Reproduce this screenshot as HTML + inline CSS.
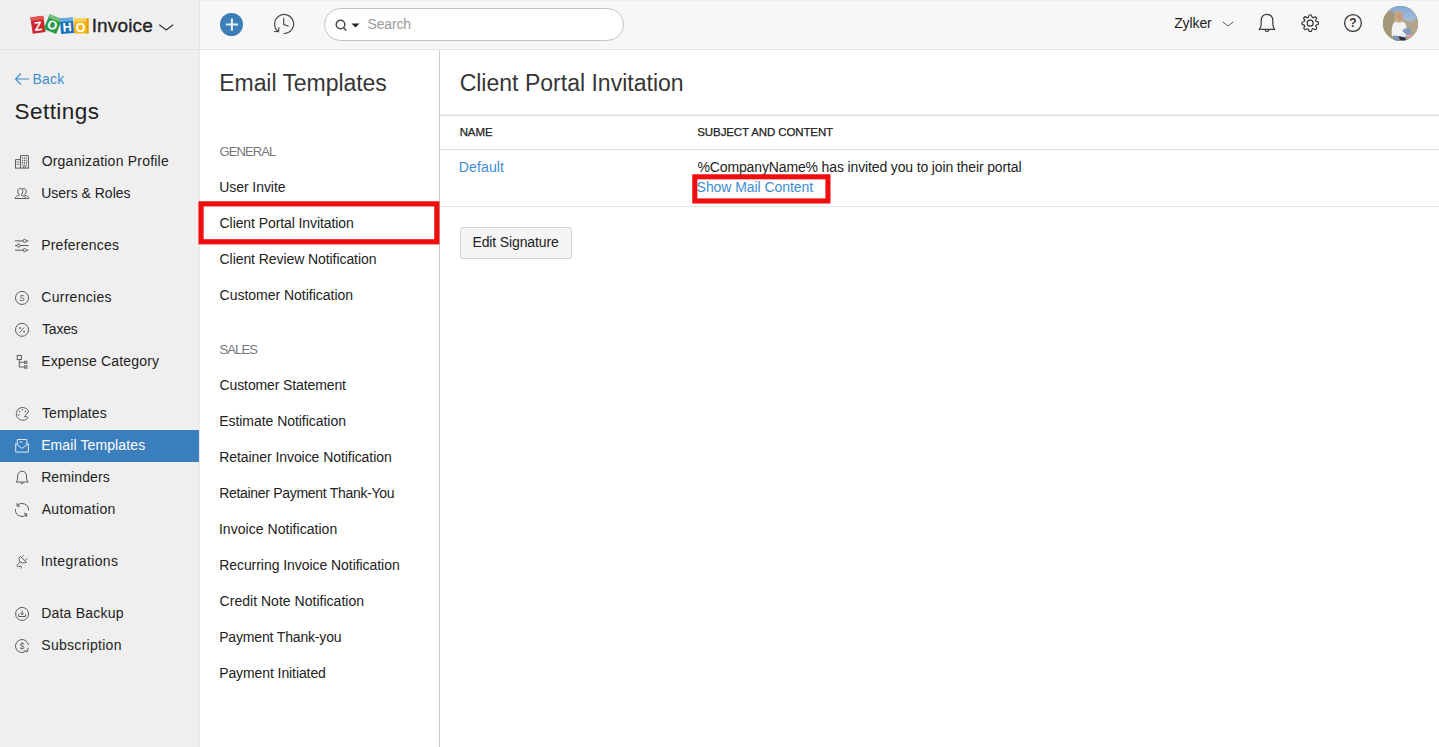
<!DOCTYPE html>
<html><head><meta charset="utf-8">
<style>
*{box-sizing:border-box;margin:0;padding:0}
html,body{width:1439px;height:747px;overflow:hidden;background:#fff}
body{font-family:"Liberation Sans",sans-serif;color:#222;font-size:14px;position:relative}
.abs{position:absolute}
#left{left:0;top:0;width:199px;height:747px;background:#efefef}
#topbar{left:199px;top:0;width:1240px;height:50px;background:#f7f7f7;border-bottom:1px solid #e4e4e4;border-left:1px solid #e6e6e6}
#lefttop{left:0;top:0;width:199px;height:50px;border-bottom:1px solid #e2e2e2}
.t{position:absolute;white-space:nowrap;line-height:1}
.nav{position:absolute;white-space:nowrap;font-size:14px;color:#222;line-height:1}
.mid{position:absolute;white-space:nowrap;font-size:14px;color:#222;line-height:1}
.ico{position:absolute;left:14px;width:16px;height:16px}
.ico svg{width:16px;height:16px;display:block;fill:none;stroke:#5c5c5c;stroke-width:1;overflow:visible}
</style></head><body>
<div id="left" class="abs"></div>
<div id="lefttop" class="abs"></div>
<div id="topbar" class="abs"></div>
<div class="abs" style="left:439px;top:50px;width:1px;height:697px;background:#cbcbcb"></div>
<div class="abs" style="left:199px;top:50px;width:1px;height:697px;background:#e8e8e8"></div>

<div class="abs" style="left:200px;top:0;width:1239px;height:1px;background:#eeeeee"></div>
<!-- logo -->
<div id="logo" class="abs" style="left:28px;top:10px;width:64px;height:28px">
<svg width="64" height="28" viewBox="0 0 64 28">
<g font-family="Liberation Sans, sans-serif" font-weight="bold" font-size="12.5" fill="#fff" text-anchor="middle">
<g transform="rotate(-8 10 15)"><rect x="3.5" y="6.500" width="13" height="16.500" fill="#cf2630"/><rect x="3.5" y="6.500" width="13" height="3.500" fill="#e4564f"/><text x="10" y="20.500">Z</text></g>
<g transform="rotate(22 24.500 14.500)"><rect x="18" y="6" width="13.500" height="16" fill="#2a9a47"/><rect x="18" y="6" width="13.500" height="3.500" fill="#74c17e"/><text x="24.700" y="19.300">O</text></g>
<g transform="rotate(-5 39 16)"><rect x="32.500" y="8" width="13" height="15.500" fill="#1b72b8"/><rect x="32.500" y="8" width="13" height="3.500" fill="#6aade0"/><text x="39" y="21.500">H</text></g>
<g><rect x="46" y="8.500" width="14.500" height="15" fill="#f7b81d"/><rect x="46" y="8.500" width="14.500" height="3" fill="#fbd35a"/><rect x="58.500" y="8.500" width="2" height="15" fill="#e39a12"/><text x="52.500" y="21.700">O</text></g>
</g></svg></div>
<div class="t" style="left:91.700px;top:15.500px;font-size:19px;color:#222;-webkit-text-stroke:0.35px #262626;color:#262626;letter-spacing:0.150px">Invoice</div>
<svg class="abs" style="left:158px;top:21.500px" width="16" height="10" viewBox="0 0 16 10"><path d="M1.3 2.700 L8.200 8 L15.100 2.700" fill="none" stroke="#333" stroke-width="1.2"/></svg>

<!-- topbar items -->
<div class="abs" style="left:220px;top:13px;width:23.200px;height:23.200px;border-radius:50%;background:#3b7eb8"></div>
<svg class="abs" style="left:220px;top:13px" width="23" height="23" viewBox="0 0 23 23"><path d="M11.900 5.500V17.700M5.800 11.600H18" stroke="#e6eff7" stroke-width="2" fill="none"/></svg>
<svg class="abs" style="left:272px;top:12px" width="24" height="24" viewBox="0 0 24 24" fill="none" stroke="#4a4a4a" stroke-width="1.2"><path d="M6.500 19.700A9.500 9.500 0 1 1 11.500 21.500"/><path d="M11.700 5.700V12.500L16.700 14.200"/><path d="M7 15.300L6.500 19.700L2 19.500"/></svg>
<div class="abs" style="left:324px;top:8px;width:300px;height:33px;border:1px solid #c3c3c3;border-radius:17px;background:#fff"></div>
<svg class="abs" style="left:333.700px;top:17.600px" width="14" height="14" viewBox="0 0 14 14" fill="none" stroke="#444" stroke-width="1.4"><circle cx="6.5" cy="6.5" r="4.3"/><path d="M9.6 9.8L12.3 12.6"/></svg>
<svg class="abs" style="left:350.500px;top:22.600px" width="9" height="5" viewBox="0 0 9 5"><path d="M0.5 0.5H8.5L4.5 4.5Z" fill="#222"/></svg>
<div class="t" style="left:367.44px;top:17px;font-size:14px;color:#999;letter-spacing:-0.129px">Search</div>

<div class="t" style="left:1174.15px;top:16px;font-size:14px;color:#222;letter-spacing:-0.102px">Zylker</div>
<svg class="abs" style="left:1222px;top:20px" width="12" height="8" viewBox="0 0 12 8"><path d="M0.800 2L6 6L11.200 2" fill="none" stroke="#555" stroke-width="1"/></svg>
<svg class="abs" style="left:1256px;top:12px" width="22" height="24" viewBox="0 0 22 24" fill="none" stroke="#3a3a3a" stroke-width="1.2"><path d="M3.200 17.300H18.800C17.300 15.800 16.800 14 16.800 12V8.500C16.800 4.800 14.500 2.300 11 2.300C7.500 2.300 5.200 4.800 5.200 8.500V12C5.200 14 4.700 15.800 3.200 17.300Z" stroke-linejoin="round"/><path d="M9 17.600C9.200 18.900 10 19.500 11 19.500C12 19.500 12.800 18.900 13 17.600"/></svg>
<svg class="abs" style="left:1300.800px;top:13.700px" width="18.400" height="18.400" viewBox="0 0 24 24" fill="none" stroke="#333" stroke-width="1.550"><circle cx="12" cy="12" r="3.900"/><path d="M19.4 15a1.65 1.65 0 0 0 .33 1.82l.06.06a2 2 0 1 1-2.830 2.830l-.06-.06a1.650 1.650 0 0 0-1.820-.33 1.650 1.650 0 0 0-1 1.510V21a2 2 0 0 1-4 0v-.09A1.650 1.650 0 0 0 9 19.400a1.650 1.650 0 0 0-1.820.33l-.06.06a2 2 0 1 1-2.830-2.830l.06-.06a1.650 1.650 0 0 0 .33-1.820 1.650 1.650 0 0 0-1.510-1H3a2 2 0 0 1 0-4h.09A1.650 1.650 0 0 0 4.600 9a1.650 1.650 0 0 0-.33-1.820l-.06-.06a2 2 0 1 1 2.830-2.830l.06.06a1.650 1.650 0 0 0 1.820.33H9a1.650 1.650 0 0 0 1-1.510V3a2 2 0 0 1 4 0v.09a1.650 1.650 0 0 0 1 1.510 1.650 1.650 0 0 0 1.820-.33l.06-.06a2 2 0 1 1 2.830 2.830l-.06.06a1.650 1.650 0 0 0-.33 1.820V9a1.650 1.650 0 0 0 1.510 1H21a2 2 0 0 1 0 4h-.09a1.650 1.650 0 0 0-1.510 1z"/></svg>
<svg class="abs" style="left:1343px;top:12.900px" width="20" height="20" viewBox="0 0 20 20"><circle cx="10" cy="10" r="8.400" fill="none" stroke="#333" stroke-width="1.250"/><text x="10" y="14.3" font-family="Liberation Sans, sans-serif" font-weight="bold" font-size="12" text-anchor="middle" fill="#333">?</text></svg>
<div id="avatar" class="abs" style="left:1383px;top:5.900px;width:35px;height:35px;border-radius:50%;overflow:hidden;background:#a89d80">
<svg width="35" height="35" viewBox="0 0 35 35"><defs><filter id="bl" x="-10%" y="-10%" width="120%" height="120%"><feGaussianBlur stdDeviation="0.700"/></filter><linearGradient id="sky" x1="0" y1="0" x2="0" y2="1"><stop offset="0" stop-color="#7fa6d2"/><stop offset="1" stop-color="#a9bed8"/></linearGradient></defs>
<rect width="35" height="35" fill="#a99e80"/>
<g filter="url(#bl)">
<path d="M5 4L9 -1H36V13L32 13.500L28 16L21 14L16 9L11 6.500Z" fill="url(#sky)"/>
<path d="M-1 8L6 4.500L11 8L10 20L8 36H-1Z" fill="#a3987a"/>
<path d="M21 14.500L28 16.500L32 14L36 13V36H22Z" fill="#b3a58b"/>
<path d="M12.300 6.500C13.500 4.300 17.500 4 19 7C20 10 20.300 14 20 16.500L12.500 17C11.800 13 11.600 9 12.300 6.500Z" fill="#c8ab86"/>
<ellipse cx="16.700" cy="10.500" rx="2.500" ry="3.500" fill="#c9977b"/>
<path d="M8.800 30C8.300 23 9.300 16.500 12.500 15.500C15 17 17.500 17 19.500 15.500C22.500 16.500 23.500 20 24 24L23 31.500L14 32Z" fill="#f1f1f4"/>
<path d="M19 25C21 22.500 24.500 21.500 26.500 22.500C28.500 24 28.500 27 27.500 29L23 31L19.500 29Z" fill="#7f9bbf"/>
<path d="M10 29.500L15 30L22 32L23 36H10Z" fill="#7c95b4"/>
<path d="M15.500 30L22.500 31.500L23 34.500L17 34Z" fill="#2e3643"/>
<path d="M14 24L22 30.500L23.500 29L16 22Z" fill="#f4f4f6"/>
<ellipse cx="25.500" cy="29.700" rx="2.300" ry="1.500" fill="#e39aa0"/>
</g></svg></div>

<!-- left nav -->
<svg class="abs" style="left:14px;top:72px" width="16" height="14" viewBox="0 0 16 14"><path d="M15 7H1.500M7 1.500L1.500 7L7 12.500" fill="none" stroke="#408dd0" stroke-width="1.1"/></svg>
<div class="t" style="left:32.38px;top:72px;font-size:14px;color:#408dd0;letter-spacing:0.231px">Back</div>
<div class="t" style="left:14.57px;top:100.6px;font-size:22.5px;color:#222;letter-spacing:0.441px">Settings</div>

<div class="nav" style="left:41.63px;top:154px;letter-spacing:0.219px">Organization Profile</div>
<div class="nav" style="left:41.21px;top:186px;letter-spacing:-0.013px">Users &amp; Roles</div>
<div class="nav" style="left:41.14px;top:238px;letter-spacing:0.248px">Preferences</div>
<div class="nav" style="left:41.26px;top:290px;letter-spacing:0.281px">Currencies</div>
<div class="nav" style="left:41.98px;top:322px;letter-spacing:-0.188px">Taxes</div>
<div class="nav" style="left:41.14px;top:354px;letter-spacing:0.188px">Expense Category</div>
<div class="nav" style="left:41.98px;top:406px;letter-spacing:0.115px">Templates</div>
<div class="abs" style="left:0;top:430px;width:199px;height:32px;background:#3b7ebd"></div>
<div class="nav" style="left:41.13px;top:438px;letter-spacing:0.112px;color:#fff">Email Templates</div>
<div class="nav" style="left:41.14px;top:470px;letter-spacing:0.112px">Reminders</div>
<div class="nav" style="left:41.71px;top:502px;letter-spacing:0.313px">Automation</div>
<div class="nav" style="left:40.66px;top:554px;letter-spacing:0.381px">Integrations</div>
<div class="nav" style="left:41.14px;top:606px;letter-spacing:0.217px">Data Backup</div>
<div class="nav" style="left:41.34px;top:638px;letter-spacing:0.278px">Subscription</div>

<!-- nav icons -->
<div class="ico" style="top:154px"><svg viewBox="0 0 16 16"><path d="M1 14.100H15M1.500 14.100V5.600H6.500M6.500 14.100V1.600H14.400V14.100"/><path d="M8.600 3.500V11.500M10.500 3.500V11.500M12.400 3.500V11.500" stroke-width="1.100" stroke-dasharray="1.300 1"/><path d="M3.200 7.500V12M4.900 7.500V12" stroke-width="1" stroke-dasharray="1.200 1"/><path d="M9.500 14V12H11.500V14" stroke-width="0.800"/></svg></div>
<div class="ico" style="top:186px"><svg viewBox="0 0 16 16"><path d="M3.800 5.300C3.800 3.500 4.800 2.500 6.300 2.500C7.800 2.500 8.800 3.500 8.800 5.300C8.800 6.800 8.200 7.800 7.500 8.300V9.300C9.500 10 11.500 10.300 11.500 12.500H1.200C1.200 10.300 3.200 10 5.100 9.300V8.300C4.400 7.800 3.800 6.800 3.800 5.300Z"/><path d="M8 2.900C8.500 2.600 9 2.500 9.700 2.500C11.200 2.500 12.200 3.500 12.200 5.300C12.200 6.800 11.600 7.800 10.900 8.300V9.300C12.800 10 14.800 10.300 14.800 12.500H11.500"/></svg></div>
<div class="ico" style="top:238px"><svg viewBox="0 0 16 16"><path d="M1 2.900H9M12.200 2.900H14.600M1 7.500H3M6.200 7.500H14.600M1 12.200H9M12.200 12.200H14.600"/><circle cx="10.600" cy="2.900" r="1.600"/><circle cx="4.600" cy="7.500" r="1.600"/><circle cx="10.600" cy="12.200" r="1.600"/></svg></div>
<div class="ico" style="top:290px"><svg viewBox="0 0 16 16"><circle cx="8" cy="7.900" r="6.500"/><text transform="translate(8 11.300) scale(0.800 1)" font-family="Liberation Sans, sans-serif" font-size="9.300" text-anchor="middle" fill="#555" stroke="none">S</text></svg></div>
<div class="ico" style="top:322px"><svg viewBox="0 0 16 16"><circle cx="8" cy="7.800" r="6.500"/><path d="M5.800 10.200L10.200 5.400"/><circle cx="5.900" cy="6" r="0.900" fill="#555" stroke="none"/><circle cx="10.100" cy="9.700" r="0.900" fill="#555" stroke="none"/></svg></div>
<div class="ico" style="top:354px"><svg viewBox="0 0 16 16"><rect x="3.200" y="1.500" width="4.200" height="4"/><rect x="10.600" y="7.300" width="2.300" height="2.100"/><rect x="10.600" y="11.800" width="2.300" height="2.300"/><path d="M5.300 5.500V13H10.600M5.300 8.300H10.600"/></svg></div>
<div class="ico" style="top:406px"><svg viewBox="0 0 16 16"><path d="M14.500 5.200C13.500 2.800 11.200 1.500 8.500 1.500C4.800 1.500 2.300 4.300 2.300 7.800C2.300 11.500 5.200 14.200 8.800 14.200C11 14.200 12.800 13.500 13.500 12.200C14 11.200 13.200 10.400 12 10.600L10.500 10.700C10.800 9.300 13.800 8 14.500 5.200Z" stroke-linejoin="round"/><circle cx="8.400" cy="3.700" r="0.750" fill="#555" stroke="none"/><circle cx="5.500" cy="5.600" r="0.750" fill="#555" stroke="none"/><circle cx="11.400" cy="5.400" r="0.750" fill="#555" stroke="none"/><circle cx="4.800" cy="9" r="0.800" fill="#555" stroke="none"/></svg></div>
<div class="ico" style="top:438px"><svg viewBox="0 0 16 16" style="stroke:#dfe9f3"><path d="M1.700 5.500V14.100H14.400V5.500"/><path d="M1.700 5.500L8 10.500L14.400 5.500"/><path d="M3.300 6.800V1.500H12.800V6.800"/><path d="M5.500 4H8.500" stroke-width="1.400" opacity="0.700"/></svg></div>
<div class="ico" style="top:470px"><svg viewBox="0 0 16 16"><path d="M2 12H14.200C13 11 12.600 9.500 12.600 8V6C12.600 3.300 10.600 1.200 8.100 1.200C5.600 1.200 3.600 3.300 3.600 6V8C3.600 9.500 3.200 11 2 12Z" stroke-linejoin="round"/><path d="M6.800 12.300C6.900 13.300 7.400 13.800 8.100 13.800C8.800 13.800 9.300 13.300 9.400 12.300"/></svg></div>
<div class="ico" style="top:502px"><svg viewBox="0 0 16 16"><path d="M3.200 3.500A6.600 6.600 0 0 1 14.600 8.500M1.500 7.100A6.600 6.600 0 0 0 12.700 12.600"/><path d="M3.400 1.100L3.100 3.800L5.700 4.500M10.100 11.400L12.600 12.100L12.700 14.700" stroke-width="1.100"/></svg></div>
<div class="ico" style="top:554px"><svg viewBox="0 0 16 16"><path d="M6.300 2.300C4.500 4 4.800 6.800 6.300 8C8 9.300 10.800 9.300 12.400 8.100Z" stroke-linejoin="round"/><path d="M8.100 2.900L9.700 1.300M11.400 6.300L13.200 4.500"/><path d="M6 8.100C4.500 9.500 3 10.800 2.900 11.800C2.900 12.800 5 12.300 7.300 12.400C7.800 13 7.500 14 6.800 14.600"/></svg></div>
<div class="ico" style="top:606px"><svg viewBox="0 0 16 16"><circle cx="8.100" cy="7.900" r="6.500"/><path d="M8.100 4.500V8.600M6.500 7.200L8.100 8.800L9.700 7.200M4.700 8.200V10.500H11.500V8.200"/></svg></div>
<div class="ico" style="top:638px"><svg viewBox="0 0 16 16"><path d="M14.400 7A6.500 6.500 0 1 0 10.500 14"/><path d="M14.300 10.300L13 13.700L9.800 12.600" stroke-width="1.100"/><text transform="translate(7.900 11.400) scale(0.850 1)" font-family="Liberation Sans, sans-serif" font-size="9.500" text-anchor="middle" fill="#555" stroke="none">$</text></svg></div>

<!-- middle -->
<div class="t" style="left:219.24px;top:71.6px;font-size:23px;color:#363636;letter-spacing:-0.052px">Email Templates</div>
<div class="t" style="left:219.61px;top:145px;font-size:13px;color:#777;letter-spacing:-0.933px">GENERAL</div>
<div class="mid" style="left:219.24px;top:180px;letter-spacing:-0.063px">User Invite</div>
<div class="mid" style="left:219.58px;top:216px;letter-spacing:-0.084px">Client Portal Invitation</div>
<div class="mid" style="left:219.58px;top:252px;letter-spacing:-0.074px">Client Review Notification</div>
<div class="mid" style="left:219.58px;top:288px;letter-spacing:-0.016px">Customer Notification</div>
<div class="t" style="left:219.43px;top:343px;font-size:13px;color:#777;letter-spacing:-0.838px">SALES</div>
<div class="mid" style="left:219.58px;top:378px;letter-spacing:-0.117px">Customer Statement</div>
<div class="mid" style="left:219.16px;top:414px;letter-spacing:-0.042px">Estimate Notification</div>
<div class="mid" style="left:219.16px;top:450px;letter-spacing:-0.062px">Retainer Invoice Notification</div>
<div class="mid" style="left:219.16px;top:486px;letter-spacing:-0.301px">Retainer Payment Thank-You</div>
<div class="mid" style="left:218.93px;top:522px;letter-spacing:0.040px">Invoice Notification</div>
<div class="mid" style="left:219.16px;top:558px;letter-spacing:-0.054px">Recurring Invoice Notification</div>
<div class="mid" style="left:219.58px;top:594px;letter-spacing:0.023px">Credit Note Notification</div>
<div class="mid" style="left:219.16px;top:630px;letter-spacing:-0.161px">Payment Thank-you</div>
<div class="mid" style="left:219.16px;top:666px;letter-spacing:-0.089px">Payment Initiated</div>


<!-- main -->
<div class="t" style="left:459.63px;top:71.6px;font-size:23px;color:#363636;letter-spacing:0.012px">Client Portal Invitation</div>
<div class="abs" style="left:440px;top:114px;width:999px;height:1px;background:#ededed"></div><div class="abs" style="left:440px;top:115px;width:999px;height:1px;background:#dfdfdf"></div>
<div class="t" style="left:459.68px;top:127px;font-size:11.500px;color:#222;letter-spacing:-0.102px;-webkit-text-stroke:0.250px #222">NAME</div>
<div class="t" style="left:697.32px;top:127px;font-size:11.500px;color:#222;letter-spacing:-0.111px;-webkit-text-stroke:0.250px #222">SUBJECT AND CONTENT</div>
<div class="abs" style="left:440px;top:149px;width:999px;height:1px;background:#dcdcdc"></div>
<div class="t" style="left:458.85px;top:160px;font-size:14px;color:#408dd0;letter-spacing:0.118px">Default</div>
<div class="t" style="left:697.49px;top:160px;font-size:14px;color:#222;letter-spacing:-0.137px">%CompanyName% has invited you to join their portal</div>
<div class="t" style="left:696.62px;top:180px;font-size:14px;color:#408dd0;letter-spacing:-0.057px">Show Mail Content</div>

<div class="abs" style="left:440px;top:206px;width:999px;height:1px;background:#e8e8e8"></div>
<div class="abs" style="left:460px;top:227px;width:112px;height:32px;border:1px solid #d2d2d2;border-radius:3px;background:#f5f5f5"></div>
<div class="t" style="left:472.46px;top:235.400px;font-size:14px;color:#222;letter-spacing:-0.128px">Edit Signature</div>
<svg class="abs rb" style="left:0;top:0" width="1439" height="747" viewBox="0 0 1439 747" fill="none" stroke="#f00d0d"><rect x="201.050" y="203.850" width="235.800" height="37.950" stroke-width="5.200"/><rect x="694.800" y="176.800" width="133.150" height="24.150" stroke-width="5.100"/></svg>
</body></html>
